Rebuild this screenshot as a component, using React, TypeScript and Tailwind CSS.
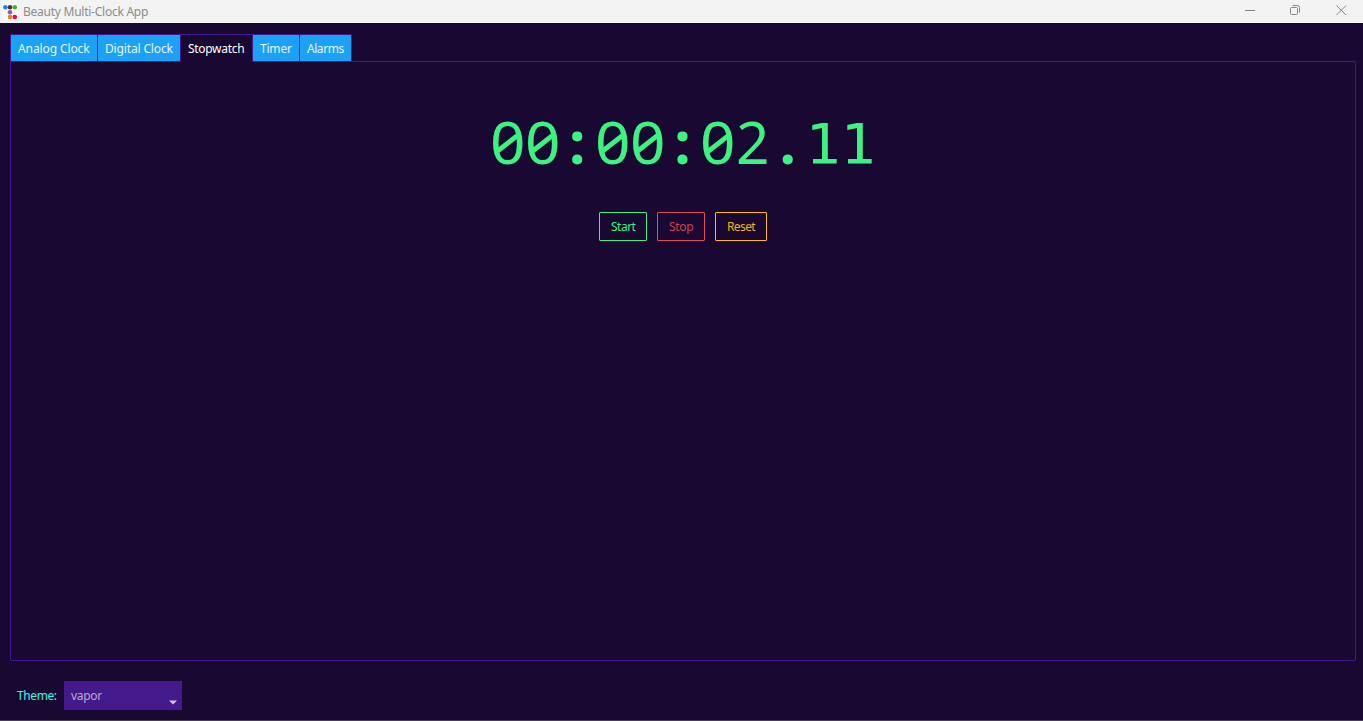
import React from "react";

const tabs = [
  { label: "Analog Clock", box: "w-[87px]", text: "tracking-[-0.1px]" },
  { label: "Digital Clock", box: "w-[83px]", text: "tracking-[-0.15px]" },
  { label: "Stopwatch", box: "w-[72px]", text: "tracking-[-0.3px]", active: true },
  { label: "Timer", box: "w-[47px]", text: "tracking-[-0.2px]" },
  { label: "Alarms", box: "w-[52px]", text: "tracking-[-0.45px]" },
];

function Digit({ char }: { char: string }) {
  if (char === "0") {
    return (
      <span className="relative flex w-[35.1px] justify-center">
        <span className="inline-block scale-x-[1.06]">0</span>
        <svg viewBox="0 0 35 44" className="absolute left-0 top-[19px] h-[44px] w-[35px]">
          <path d="M7 30.5 L27.5 14.5" stroke="currentColor" strokeWidth="4.8" fill="none" />
        </svg>
      </span>
    );
  }
  if (char === "1") {
    return (
      <span className="flex w-[35.1px] justify-center pr-[2px] pt-[2px] font-['DejaVu_Sans_Mono'] text-[56px]">
        <span className="inline-block scale-x-[1.05]">1</span>
      </span>
    );
  }
  if (char === ":" || char === ".") {
    return <span className="flex w-[35.1px] justify-center pr-[1px] font-bold">{char}</span>;
  }
  return <span className="flex w-[35.1px] justify-center pr-[1px]">{char}</span>;
}

export default function App() {
  return (
    <div className="flex h-[721px] w-[1363px] flex-col overflow-hidden border-b border-[#46424b] bg-[#190831] font-['Noto_Sans','Open_Sans',sans-serif] text-[12px] leading-[18px]">
      <header className="flex h-[23px] shrink-0 items-center bg-[#f3f3f3] text-[#8b8b8b]">
        <svg width="16" height="16" viewBox="0 0 16 16" className="ml-[2px] mr-[5px]">
          <rect width="16" height="16" rx="1.5" fill="#fff" />
          <circle cx="3.3" cy="3.2" r="2.3" fill="#2780f5" />
          <circle cx="8" cy="3.2" r="2.3" fill="#343a40" />
          <circle cx="12.8" cy="3.2" r="2.3" fill="#3fb618" />
          <circle cx="8" cy="8.2" r="2.3" fill="#9954bb" />
          <circle cx="8" cy="13" r="2.3" fill="#ff7518" />
          <circle cx="12.8" cy="13" r="2.3" fill="#ff0039" />
        </svg>
        <span className="whitespace-nowrap pt-px tracking-[-0.25px]">Beauty Multi-Clock App</span>
        <div className="ml-auto flex h-full items-center">
          <svg width="118" height="23" fill="none" stroke="#858585">
            <path d="M0 10.5H10" />
            <rect x="45.5" y="7.5" width="7" height="7" rx="1" />
            <path d="M47.5 5.5h5a2 2 0 0 1 2 2v5" />
            <path d="M91.5 5.5l9.5 9.5M101 5.5l-9.5 9.5" />
          </svg>
        </div>
      </header>
      <main className="flex min-h-0 flex-1 flex-col pl-[10px] pr-[7px] pt-[11px]">
        <nav className="z-10 -mb-px flex h-[28px] shrink-0">
          {tabs.map((tab) => (
            <button
              key={tab.label}
              className={`flex h-[28px] shrink-0 items-center whitespace-nowrap border-l border-t border-[#44198b] pl-[7px] last:w-[53px] ${tab.box} ${tab.text} ${
                tab.active
                  ? "bg-[#190831] text-white"
                  : "border-b bg-[#1ba2f6] pt-px text-[#e8f5ff] last:border-r"
              }`}
            >
              {tab.label}
            </button>
          ))}
        </nav>
        <section className="flex h-[600px] shrink-0 flex-col items-center rounded-[2px] border border-[#44198b] pt-[40px]">
          <div className="flex h-[80px] text-[58.5px] leading-[79px] text-[#3cf281]">
            {"00:00:02.11".split("").map((c, i) => (
              <Digit key={i} char={c} />
            ))}
          </div>
          <div className="mt-[30px] flex gap-[10px]">
            <button className="flex h-[29px] w-[48px] items-center rounded-[1px] border border-[#3cf281] pl-[11px] tracking-[-0.5px] text-[#3cf281]">
              Start
            </button>
            <button className="flex h-[29px] w-[48px] items-center rounded-[1px] border border-[#e44c55] pl-[11px] tracking-[-0.35px] text-[#d14353]">
              Stop
            </button>
            <button className="flex h-[29px] w-[52px] items-center rounded-[1px] border border-[#ffbd05] pl-[11px] tracking-[-0.6px] text-[#f2b40b]">
              Reset
            </button>
          </div>
        </section>
        <footer className="mt-[20px] flex h-[29px] items-center pl-[7px]">
          <span className="w-[47px] whitespace-nowrap tracking-[-0.4px] text-[#32fbe2]">Theme:</span>
          <div className="flex h-[29px] w-[118px] items-center justify-between bg-[#44198b] pl-[7px] pr-[5px] tracking-[-0.3px] text-[#b9a9d2]">
            <span>vapor</span>
            <svg width="8" height="5" className="mt-[14px]">
              <path d="M0 0.5H8L4 4.5Z" fill="#d1c5e2" />
            </svg>
          </div>
        </footer>
      </main>
    </div>
  );
}
